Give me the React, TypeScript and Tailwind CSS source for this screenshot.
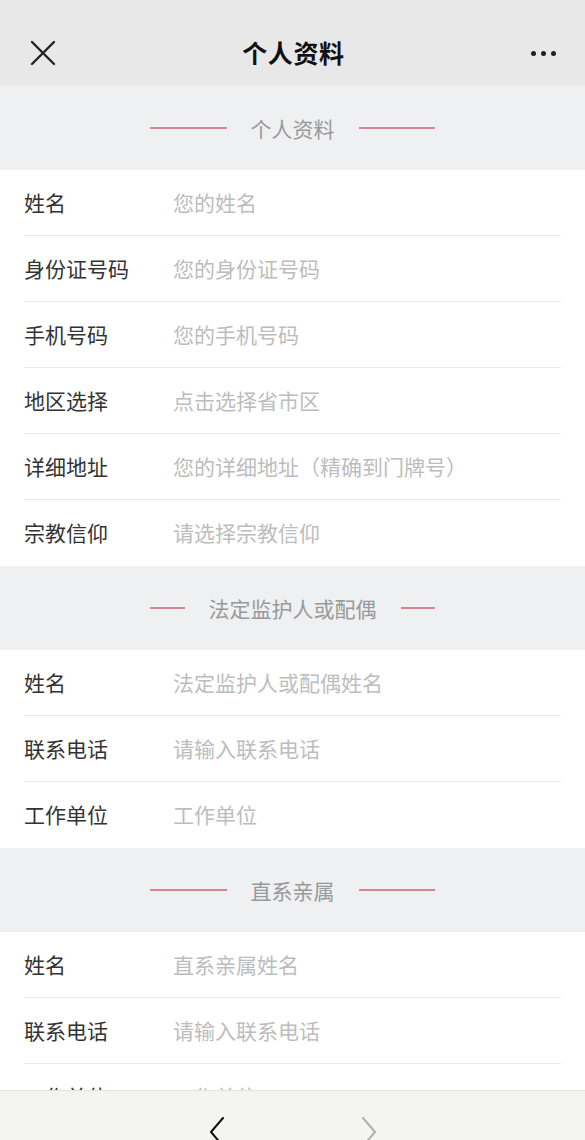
const font = { fontFamily: '"Noto Sans CJK SC", "Noto Sans", sans-serif' }

type Field = { label: string; placeholder: string }

const sections: { title: string; fields: Field[] }[] = [
  {
    title: '个人资料',
    fields: [
      { label: '姓名', placeholder: '您的姓名' },
      { label: '身份证号码', placeholder: '您的身份证号码' },
      { label: '手机号码', placeholder: '您的手机号码' },
      { label: '地区选择', placeholder: '点击选择省市区' },
      { label: '详细地址', placeholder: '您的详细地址（精确到门牌号）' },
      { label: '宗教信仰', placeholder: '请选择宗教信仰' },
    ],
  },
  {
    title: '法定监护人或配偶',
    fields: [
      { label: '姓名', placeholder: '法定监护人或配偶姓名' },
      { label: '联系电话', placeholder: '请输入联系电话' },
      { label: '工作单位', placeholder: '工作单位' },
    ],
  },
  {
    title: '直系亲属',
    fields: [
      { label: '姓名', placeholder: '直系亲属姓名' },
      { label: '联系电话', placeholder: '请输入联系电话' },
      { label: '工作单位', placeholder: '工作单位' },
    ],
  },
]

function SectionTitle({ title }: { title: string }) {
  return (
    <div className="h-[84px] bg-[#eef0f2] flex items-center justify-center">
      <div className="w-[285px] flex items-center gap-6">
        <div className="flex-1 h-[1.5px] bg-[#d9858f]" />
        <span className="text-[21px] text-[#999999] whitespace-nowrap leading-none">{title}</span>
        <div className="flex-1 h-[1.5px] bg-[#d9858f]" />
      </div>
    </div>
  )
}

function FieldRow({ field, last }: { field: Field; last: boolean }) {
  return (
    <div className="bg-white px-6">
      <div className={`h-[66px] flex items-center ${last ? '' : 'border-b border-[#e8e8e8]'}`}>
        <label className="w-[149px] shrink-0 text-[21px] text-[#333333]">{field.label}</label>
        <input
          className="flex-1 min-w-0 bg-transparent outline-none text-[21px] text-[#333333] placeholder:text-[#bdbdbd]"
          style={font}
          placeholder={field.placeholder}
        />
      </div>
    </div>
  )
}

export default function App() {
  return (
    <div className="h-[1140px] w-full flex flex-col overflow-hidden bg-white" style={font}>
      {/* Top nav */}
      <div className="h-[86px] shrink-0 bg-[#e8e8e8] flex items-center justify-between pl-[30px] pr-[29px] pt-[20px]">
        <svg width="26" height="26" viewBox="0 0 26 26" className="text-[#222]">
          <path d="M2 2L24 24M24 2L2 24" stroke="currentColor" strokeWidth="2.4" strokeLinecap="round" />
        </svg>
        <h1 className="text-[25px] font-semibold text-[#111111] tracking-wide">个人资料</h1>
        <div className="flex gap-[5px] items-center">
          <span className="w-[5px] h-[5px] rounded-full bg-[#222]" />
          <span className="w-[5px] h-[5px] rounded-full bg-[#222]" />
          <span className="w-[5px] h-[5px] rounded-full bg-[#222]" />
        </div>
      </div>

      {/* Form */}
      <div className="flex-1 overflow-hidden">
        {sections.map((s) => (
          <div key={s.title}>
            <SectionTitle title={s.title} />
            {s.fields.map((f, i) => (
              <FieldRow key={f.label + i} field={f} last={i === s.fields.length - 1} />
            ))}
          </div>
        ))}
      </div>

      {/* Bottom browser bar */}
      <div className="h-[50px] shrink-0 bg-[#f4f4f2] border-t border-[#e2e2e0] flex items-start justify-center gap-[136px] pt-[26px] overflow-hidden">
        <svg width="16" height="30" viewBox="0 0 16 30" className="text-[#111]">
          <path d="M14 1L2 15L14 29" fill="none" stroke="currentColor" strokeWidth="2" strokeLinecap="round" strokeLinejoin="round" />
        </svg>
        <svg width="16" height="30" viewBox="0 0 16 30" className="text-[#b0b0b0]">
          <path d="M2 1L14 15L2 29" fill="none" stroke="currentColor" strokeWidth="2" strokeLinecap="round" strokeLinejoin="round" />
        </svg>
      </div>
    </div>
  )
}
